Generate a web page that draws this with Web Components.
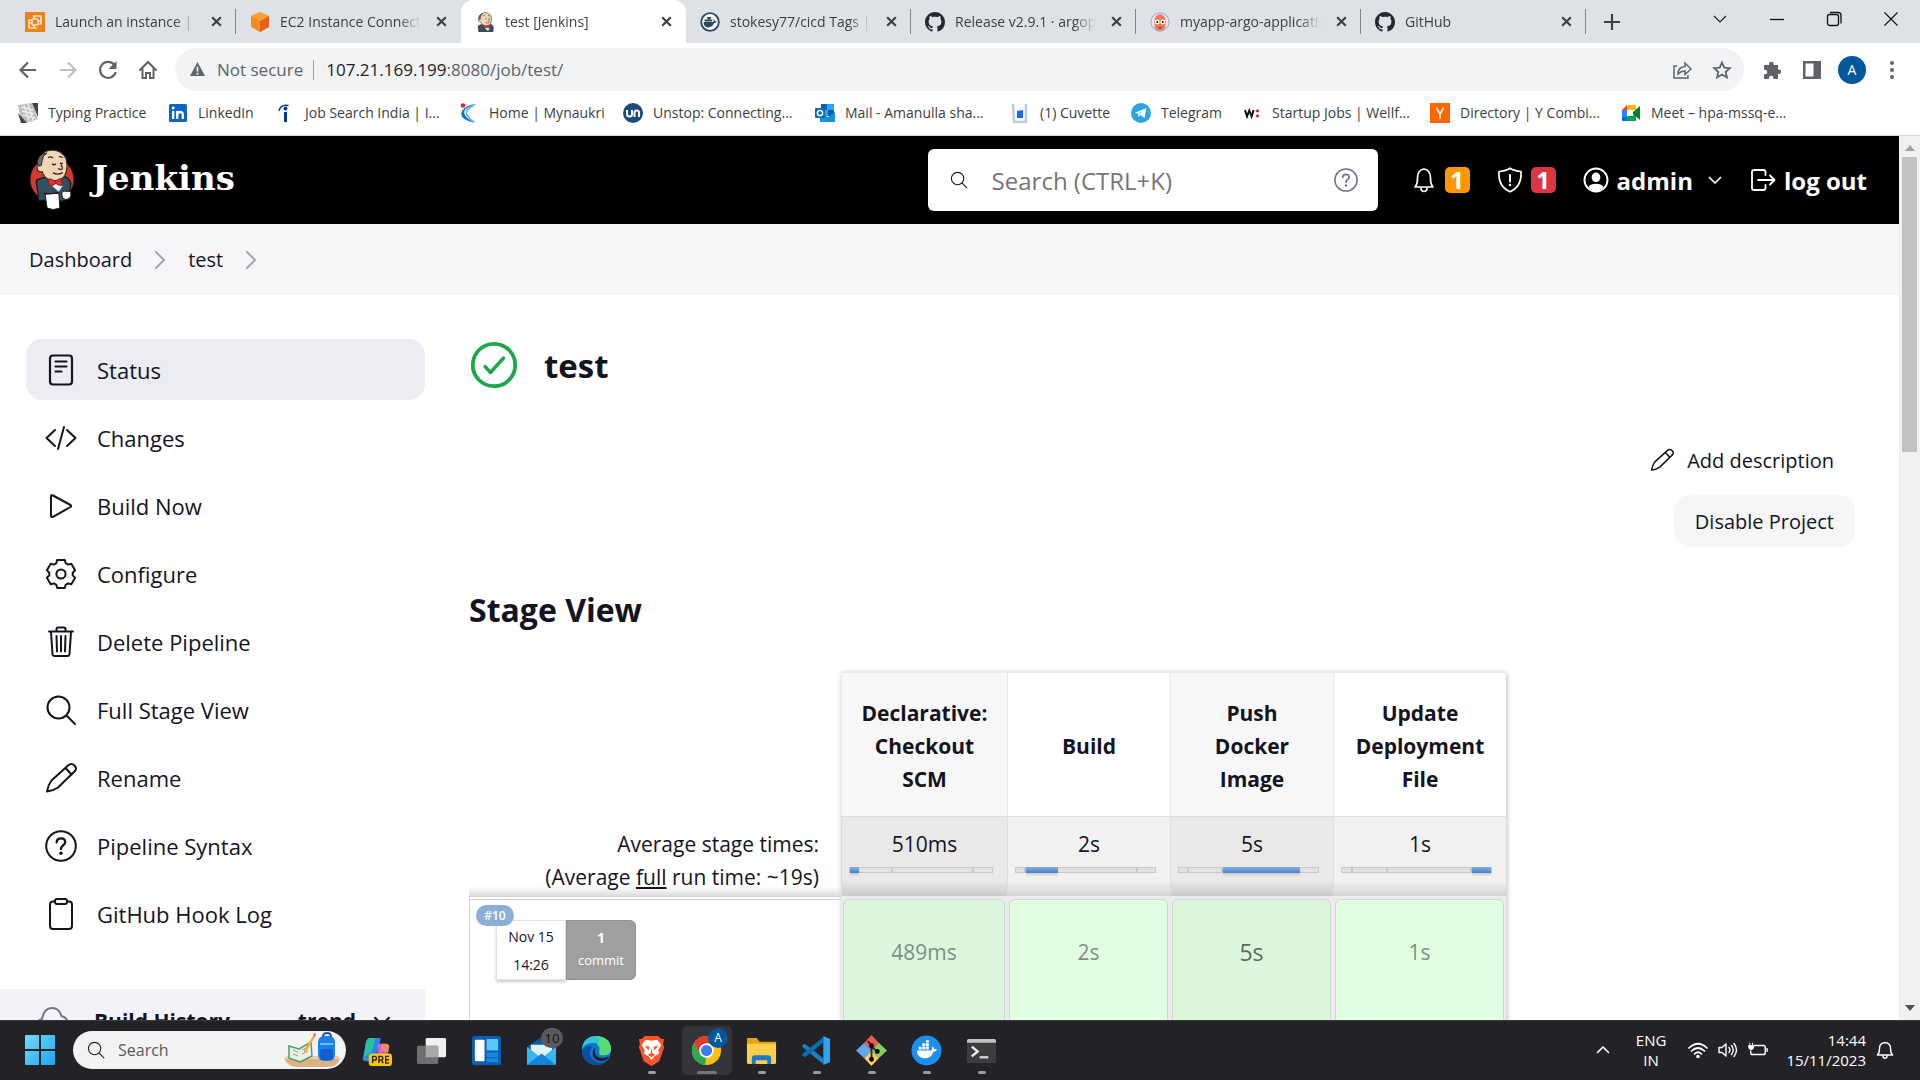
<!DOCTYPE html>
<html lang="en">
<head>
<meta charset="utf-8">
<title>test [Jenkins]</title>
<style>
html,body{margin:0;height:100%}
body{font-family:"Open Sans","Noto Sans",sans-serif;color:#14141f;overflow:hidden;background:#fff}
</style>
</head>
<body>
<desk-top></desk-top>
<script>
const gear = (() => {
  const p = [];
  for (let i = 0; i < 6; i++) {
    for (const [da, r] of [[-23, 11.8], [-15, 14.6], [15, 14.6], [23, 11.8]]) {
      const a = (i * 60 - 90 + da) * Math.PI / 180;
      p.push((16 + r * Math.cos(a)).toFixed(1) + ' ' + (16 + r * Math.sin(a)).toFixed(1));
    }
  }
  return 'M' + p.join('L') + 'Z';
})();
const butler = `
<path d="M10 46L8 33Q9 30 18 29L37 28Q42 30 43 35L42 46Q40 52 34 53L10 52Z" fill="#335061" stroke="#1d1916" stroke-width="1.4"/>
<path d="M11 17Q8 16 9 20Q10 24 14 23Q16 30 23 32Q33 34 37 27Q41 19 38 9Q33 1 24 1Q14 2 12 9Z" fill="#f0d6b7" stroke="#3a2c22" stroke-width="1.2"/>
<path d="M13 17L14 12Q14 7 19 4Q12 5 10 10Q8 14 10 17Z" fill="#6d6b6d" stroke="#2a2624"/>
<path d="M20 9Q22 7 25 9M31 8Q33 7 35 9M24 15Q26 17 28 15M32 14Q34 16 35 14M33 16Q36 20 33 21L30 20M25 24Q29 27 35 24" fill="none" stroke="#3a2c22" stroke-width="1.3"/>
<path d="M21 31L28 34L33 30L35 38L31 44L24 38Z" fill="#e8eef2" stroke="#335061"/>
<path d="M20 31Q22 29 27 33Q32 29 34 31L34 37Q30 37 28 35Q24 38 21 37Z" fill="#d33833" stroke="#8c1a15"/>`;
const cloth = `<path d="M17 46L31 45L32 60Q25 63 19 60Z" fill="#fff" stroke="#1d1916"/>
<path d="M15 45Q24 46 31 44" stroke="#1d1916" fill="none"/>
<path d="M34 46Q34 42 38 43L43 43Q44 47 42 50Q38 53 35 50Z" fill="#fff" stroke="#1d1916"/>`;
const S = (w, c = 'currentColor') => `fill="none" stroke="${c}" stroke-width="${w}" stroke-linecap="round" stroke-linejoin="round"`;
const octo = `<path fill="#24292f" d="M8 0C3.58 0 0 3.58 0 8c0 3.54 2.29 6.53 5.47 7.59.4.07.55-.17.55-.38 0-.19-.01-.82-.01-1.49-2.01.37-2.53-.49-2.69-.94-.09-.23-.48-.94-.82-1.13-.28-.15-.68-.52-.01-.53.63-.01 1.08.58 1.23.82.72 1.21 1.87.87 2.33.66.07-.52.28-.87.51-1.07-1.78-.2-3.64-.89-3.64-3.95 0-.87.31-1.59.82-2.15-.08-.2-.36-1.02.08-2.12 0 0 .67-.21 2.2.82.64-.18 1.32-.27 2-.27s1.36.09 2 .27c1.53-1.04 2.2-.82 2.2-.82.44 1.1.16 1.92.08 2.12.51.56.82 1.27.82 2.15 0 3.07-1.87 3.75-3.65 3.95.29.25.54.73.54 1.48 0 1.07-.01 1.93-.01 2.2 0 .21.15.46.55.38A8.01 8.01 0 0 0 16 8c0-4.42-3.58-8-8-8z"/>`;
/* name: [viewBox, markup] */
const ICONS = {
  jenkinsLogo: ['0 0 48 63', `<circle cx="24" cy="31" r="22" fill="#d33833"/>${butler}${cloth}`],
  jenkinsFav: ['2 0 44 46', butler],
  aws: ['0 0 20 20', `<rect width="20" height="20" fill="#ed8216"/><g fill="none" stroke="#fff" stroke-width="1.2"><rect x="7" y="7" width="6" height="6" rx="1"/><path d="M8 4h8v8h-3M12 16H4V8h3M9 4v3M4 11h3M13 9h3M9 13v3"/></g>`],
  ec2: ['0 0 20 20', `<path d="M10 0l9 4v11l-9 5-9-5V4z" fill="#f58a1f"/><path d="M10 9v11l9-5V4z" fill="#e8601c"/><path d="M10 0l9 4-9 5-9-5z" fill="#fd9f35"/>`],
  dockerHub: ['0 0 22 22', `<circle cx="11" cy="11" r="9.7" fill="#fff" stroke="#2c4a5c" stroke-width="2"/><path d="M4 11h10.500c.8-1 .6-2 .2-3 1.200.4 1.600 1.400 1.700 2.300h2c-.4 1.400-1.500 1.900-2.900 1.900C14.500 15.500 12 17 9 17 5.500 17 4 14.500 4 11z" fill="#2c4a5c"/><path d="M5 8.200h8.500v2.300H5zM8 5.500h4v2.500H8z" fill="#2c4a5c"/>`],
  github: ['0 0 16 16', octo],
  argo: ['0 0 22 22', `<circle cx="11" cy="11" r="10" fill="#e9e8f7" stroke="#9c93cf"/><path d="M5 9a6 6.500 0 0 1 12 0v6q0 5-6 5.500Q5 20 5 15z" fill="#ef7b4d"/><circle cx="8" cy="11" r="2.700" fill="#fff"/><circle cx="14" cy="11" r="2.700" fill="#fff"/><circle cx="8" cy="11" r="1"/><circle cx="14" cy="11" r="1"/><path d="M9 17q2 2 4 0z"/>`],
  close: ['0 0 12 12', `<path d="M2 2l8 8M10 2l-8 8" stroke="#3c4043" stroke-width="2"/>`],
  plus: ['0 0 16 16', `<path d="M8 0v16M0 8h16" stroke="#3c4043" stroke-width="2.200"/>`],
  winDown: ['0 0 16 16', `<path d="M2 5l6 6 6-6" fill="none" stroke="#222" stroke-width="1.200"/>`],
  winMin: ['0 0 16 16', `<path d="M1 8.500h14" stroke="#111" stroke-width="1.300"/>`],
  winMax: ['0 0 16 16', `<g fill="none" stroke="#111" stroke-width="1.300"><rect x="1.500" y="3.500" width="11" height="11" rx="2"/><path d="M4 1.500h8q3 0 3 3v8"/></g>`],
  winClose: ['0 0 16 16', `<path d="M1.500 1.500l13 13M14.500 1.500l-13 13" stroke="#111" stroke-width="1.200"/>`],
  back: ['0 0 20 20', `<path d="M18 10H3M10 2.500L2.500 10l7.500 7.500" fill="none" stroke="#5f6368" stroke-width="2.200"/>`],
  fwd: ['0 0 20 20', `<path d="M2 10h15M10 2.500l7.500 7.500-7.500 7.500" fill="none" stroke="#bcbfc3" stroke-width="2.200"/>`],
  reload: ['0 0 20 20', `<path d="M16.500 5A8 8 0 1 0 17.800 12" fill="none" stroke="#5f6368" stroke-width="2.200"/><path d="M18.500 1v8h-8z" fill="#5f6368"/>`],
  home: ['0 0 20 20', `<path d="M1.500 10.500L10 2l8.500 8.500M4.500 8.500v9.500h3.500v-5h4v5h3.500V8.500" fill="none" stroke="#5f6368" stroke-width="2"/>`],
  warn: ['0 0 16 16', `<path d="M8 0l8 15H0z" fill="#5f6368"/><path d="M8 5v5M8 11.500v2" stroke="#f1f3f4" stroke-width="1.800"/>`],
  share: ['0 0 20 20', `<path d="M5 6H2v12h14v-3M6 14q0-7 7-7.500V3l6 6-6 5.500V11q-4 0-7 3z" fill="none" stroke="#5f6368" stroke-width="1.500"/>`],
  star: ['0 0 20 20', `<path d="M10 2.500l2.300 5.200 5.600.5-4.200 3.700 1.200 5.500-4.900-2.900-4.900 2.900 1.200-5.500L2.100 8.200l5.600-.5z" fill="none" stroke="#5f6368" stroke-width="1.800"/>`],
  puzzle: ['0 0 20 20', `<path d="M2 5h5V4a2.300 2.300 0 0 1 4.600 0v1H16v4.500h.8a2.300 2.300 0 0 1 0 4.600H16V19h-4.500v-1a2.300 2.300 0 0 0-4.600 0v1H2v-4.700h1a2.200 2.200 0 0 0 0-4.500H2z" fill="#5f6368"/>`],
  panel: ['0 0 20 20', `<path d="M1 1h18v18H1zM3.500 3.500v13h8v-13z" fill="#5f6368" fill-rule="evenodd"/>`],
  dots: ['0 0 20 20', `<g fill="#5f6368"><circle cx="10" cy="3" r="2"/><circle cx="10" cy="10" r="2"/><circle cx="10" cy="17" r="2"/></g>`],
  typing: ['0 0 20 20', `<path d="M0 2L14 0l6 16-12 4-5-3z" fill="#bdbdbd"/><path d="M0 10l3 10h6zM14 0l6 14V0z" fill="#444"/><path d="M3 4l12 3M4 8l12 3M5 12l12 3M6 2l5 16M10 1l5 16" stroke="#eee" stroke-width="1.300"/>`],
  linkedin: ['0 0 20 20', `<rect x="1" y="1" width="18" height="18" rx="1.500" fill="#0a66c2"/><path d="M5.200 8v8M9.200 8v8M9.200 12q.3-3 3-3t2.600 3v4" fill="none" stroke="#fff" stroke-width="2.300"/><circle cx="5.200" cy="5" r="1.500" fill="#fff"/>`],
  indeed: ['0 0 20 20', `<path d="M10.500 9v10" stroke="#003a9b" stroke-width="3"/><circle cx="10.500" cy="5.500" r="2" fill="#003a9b"/><path d="M4 8q1.500-7 9.500-5.500" fill="none" stroke="#003a9b" stroke-width="1.400"/>`],
  naukri: ['0 0 20 20', `<path d="M18 1Q2 5 6 12q2 4 10 8Q-1 16 3 8 6 2 18 1z" fill="#1a6fd0"/><path d="M15 2Q5 7 8 12q3 5 7 7" fill="none" stroke="#4fb3ef" stroke-width="1.500"/><circle cx="4" cy="2.500" r="2.300" fill="#e5282f"/>`],
  unstop: ['0 0 20 20', `<circle cx="10" cy="10" r="10" fill="#1c4980"/><path d="M4 7v4q0 2.500 2.500 2.500T9 11V7M11.500 14V10q0-2.500 2.300-2.500T16 10v4" fill="none" stroke="#fff" stroke-width="2"/>`],
  outlook: ['0 0 20 20', `<path d="M6 1h13v12H6z" fill="#28a8ea"/><path d="M6 1h6v6H6z" fill="#0364b8"/><path d="M13 7h6v6h-6z" fill="#0a5fb0"/><path d="M5 10l8 4 7-5v10H5z" fill="#1490df"/><rect y="5" width="10" height="10" rx="1" fill="#0f6cbd"/><circle cx="5" cy="10" r="2.600" fill="none" stroke="#fff" stroke-width="1.500"/>`],
  cuvette: ['0 0 20 20', `<path d="M3 1l1 18h12V1" fill="none" stroke="#b9cbe4" stroke-width="2.500"/><path d="M7 8l6-1v8H7z" fill="#1769f5"/>`],
  telegram: ['0 0 20 20', `<circle cx="10" cy="10" r="10" fill="#2ca5e0"/><path d="M3.500 10L15.500 5l-2 10-4-3-2 2-.5-3.500z" fill="#fff"/><path d="M7 10.500L13 7l-4.500 5z" fill="#b5dcf1"/>`],
  wellfound: ['0 0 20 20', `<path d="M3 7l2 6.500 2.300-6 2.300 6 2-6.500" fill="none" stroke="#111" stroke-width="2"/><circle cx="15.500" cy="8" r="1.400" fill="#d0021b"/><circle cx="15.500" cy="13" r="1.400" fill="#d0021b"/>`],
  yc: ['0 0 20 20', `<rect width="20" height="20" fill="#f60"/><path d="M6.500 5L10 11l3.500-6M10 11v5" fill="none" stroke="#fff" stroke-width="1.500"/>`],
  meet: ['0 0 20 20', `<path d="M1 7l5-5v5z" fill="#ea4335"/><path d="M6 2h9v5H6z" fill="#fbbc04"/><path d="M1 7h5v7H1z" fill="#2684fc"/><path d="M1 14h5v4H2q-1 0-1-1z" fill="#0066da"/><path d="M6 13h5l4-3v8H6z" fill="#00ac47"/><path d="M11 10l8-7v14z" fill="#00832d"/><path d="M6 7h6v6H6z" fill="#fff"/>`],
  search: ['0 0 32 32', `<circle cx="13.500" cy="13.500" r="11" ${S(2)}/><path d="M21.500 21.500L30 30" ${S(2)}/>`],
  help: ['0 0 32 32', `<circle cx="16" cy="16" r="14.800" ${S(2)}/><path d="M11.700 12.200q.2-3.800 4.300-3.800t4.200 3.600q0 2-2.200 3.400Q16 16.700 16 19" ${S(2.400)}/><circle cx="16" cy="23.300" r="1.700" fill="currentColor"/>`],
  bell: ['0 0 26 26', `<path d="M4 20q2.500-3 2.500-9Q6.500 3 13 2q6.500 1 6.500 9 0 6 2.500 9z" ${S(1.700)}/><path d="M10 21q0 3.500 3 3.500t3-3.500" ${S(1.700)}/>`],
  shield: ['0 0 26 26', `<path d="M13 1.200q4 2.800 11 3.300 1 15-11 20.300Q1 19.500 2 4.500q7-.5 11-3.300z" ${S(1.700)}/><path d="M13 8v6.500" ${S(2)}/><circle cx="13" cy="18" r="1.300" fill="currentColor"/>`],
  user: ['0 0 26 26', `<circle cx="13" cy="13" r="11.500" ${S(1.900)}/><path d="M13 5.500a4.300 4.700 0 0 1 0 9.600 4.300 4.700 0 0 1 0-9.600zM5.500 20q2-3.300 7.500-3.300t7.500 3.300q-3 4-7.500 4t-7.500-4z" fill="currentColor"/>`],
  chevDown: ['0 0 16 16', `<path d="M2.500 5.500L8 11l5.500-5.500" ${S(1.700)}/>`],
  chevRight: ['0 0 18 18', `<path d="M5 1l8 8-8 8" ${S(2)}/>`],
  logout: ['0 0 26 26', `<path d="M15.500 8V5q0-2-2-2H4Q2 3 2 5v16q0 2 2 2h9.500q2 0 2-2v-3M8 13h16M20 8.500l4.500 4.500-4.500 4.500" ${S(1.800)}/>`],
  doc: ['0 0 32 32', `<rect x="5" y="1.500" width="22" height="29" rx="3" ${S(2.200)}/><path d="M10.500 7.500h11M10.500 12.500h11M10.500 17.500h6" ${S(2.200)}/>`],
  code: ['0 0 32 32', `<path d="M10 8L1.500 16l8.500 8M22 8l8.500 8-8.500 8M19 5l-6 22" ${S(2)}/>`],
  play: ['0 0 32 32', `<path d="M6 6.500q0-2 2-1L25.500 15q1.300 1 0 2L8 26.800q-2 .8-2-1z" ${S(2)}/>`],
  gear: ['0 0 32 32', `<path d="${gear}" ${S(2)}/><circle cx="16" cy="16" r="4.600" ${S(2)}/>`],
  trash: ['0 0 32 32', `<path d="M4 5.500h24M11.500 5V3q0-1.500 1.500-1.500h6q1.500 0 1.500 1.500v2M6 6l1.500 22q.2 2 2 2h13q1.800 0 2-2L26 6M11.500 10l.5 15.500M16 10v15.500M20.500 10L20 25.500" ${S(2)}/>`],
  pencil: ['0 0 32 32', `<path d="M2 29.500Q3 23 6.500 18.500L23 3.500Q26.500.5 29.500 3.500t0 6L13 25.500Q8 29 2 29.500zM20.500 6l6 6.500" ${S(2)}/>`],
  clipboard: ['0 0 32 32', `<path d="M10 3.500H8q-3 0-3 3V28q0 3 3 3h16q3 0 3-3V6.500q0-3-3-3h-2" ${S(2)}/><rect x="10" y="1" width="12" height="5" rx="2" ${S(2)}/>`],
  cloud: ['0 0 34 30', `<path d="M8 28Q1 27 1.500 20 2 14 7 13 9 2 17 2q7 0 9.500 8Q34 12 32.500 20q-1 8-8 8z" ${S(2, '#73738c')}/>`],
  ok: ['0 0 48 48', `<circle cx="25" cy="24" r="21.200" ${S(3.800, '#1ea64b')}/><path d="M16 25.500l5.500 6L34.500 17" ${S(3.400, '#1ea64b')}/>`],
  win: ['0 0 30 30', `<defs><linearGradient id="w" x1="0" y1="0" x2="1" y2="1"><stop stop-color="#6fdcfb"/><stop offset="1" stop-color="#1fa5ee"/></linearGradient></defs><path d="M0 1q0-1 1-1h13v14H0zM16 0h13q1 0 1 1v13H16zM0 16h14v14H1q-1 0-1-1zM16 16h14v13q0 1-1 1H16z" fill="url(#w)"/>`],
  bag: ['0 0 56 36', `<path d="M0 26h56q-2 9-12 9H14Q3 35 0 26z" fill="#dcb083"/><path d="M2 24h52l2 3H0z" fill="#f0cfa5"/><path d="M5 14l10 3 12-7 1 14-12 6-11-4z" fill="#e9f1e6" stroke="#4f9e63" stroke-width="1.500"/><path d="M9 18l5 2M9 22l5 2M18 18l6-3M18 22l6-3" stroke="#8fa697"/><path d="M29 4l2 1-9 15-2 1v-3z" fill="#f4ad3a"/><path d="M29 4l2 1 1-3-2-1z" fill="#ef5b61"/><rect x="34" y="4" width="17" height="25" rx="6" fill="#1b7ff0"/><path d="M39 5q0-4 4-4t4 4" fill="none" stroke="#1559b8" stroke-width="2"/><rect x="36" y="17" width="13" height="11" rx="3" fill="#0f5fd0"/><path d="M36 12h13" stroke="#68c1ff" stroke-width="2"/>`],
  copilot: ['0 0 32 32', `<path d="M9 3h9q3 0 2 3l-5 17q-1 4-5 4H5q-4 0-3-4L5 8q1-5 4-5z" fill="#2b86e8"/><path d="M9 3h6l-4 14-8 6L5 8q1-5 4-5z" fill="#27c2a0"/><path d="M17 9h8q5 0 4 4l-3 12q-1 4-5 4h-8q3-1 4-5z" fill="#c65af0"/><path d="M21 9h4q5 0 4 4l-1 5-8-2z" fill="#f08a5f"/><rect x="8" y="19" width="24" height="13" rx="3" fill="#fdc400"/><path d="M12 29v-7h2q2 0 2 2t-2 2h-2M18.500 29v-7h2q2 0 2 2t-2 2h-2M21 26l2 3M29 22h-3.500v7H29M25.500 25.500H29" fill="none" stroke="#2b2100" stroke-width="1.400"/>`],
  taskview: ['0 0 32 32', `<rect x="10" y="3" width="21" height="20" rx="1.500" fill="#f1f1f1"/><rect x="1" y="11" width="22" height="19" rx="1.500" fill="#6f6f70"/><path d="M10 11h13v12H10z" fill="#a9a9a9"/>`],
  widgets: ['0 0 32 32', `<rect x="1" y="1" width="30" height="30" rx="3" fill="#0a5fb4"/><rect x="4" y="5" width="10" height="22" rx="1" fill="#fff"/><rect x="16" y="4" width="12" height="12" rx="1" fill="#59c6f5"/><rect x="16" y="18" width="12" height="5" fill="#1788e0"/><rect x="16" y="24" width="12" height="4" fill="#1788e0"/>`],
  mail: ['0 0 32 32', `<path d="M1 12L16 2l15 10v19H1z" fill="#0c59a4"/><path d="M5 10h22v14H5z" fill="#dff3fd"/><path d="M1 12l15 12 15-12v19H1z" fill="#35b7f1"/><path d="M1 31l15-12 15 12z" fill="#1683d8"/>`],
  edge: ['0 0 32 32', `<circle cx="16" cy="16" r="15" fill="#1477cf"/><path d="M1 15Q2 1 16 1q14 1 15 13 0 7-8 7-5 0-4-4 2-9-7-9Q4 8 1 15z" fill="#35c6d4"/><path d="M16 1q14 1 15 13 0 7-8 7-5 0-4-4 1-5-2-7 4-5-1-9z" fill="#55dc77"/><path d="M12 12Q6 18 12 25q6 5 14 2-5 5-12 4Q3 29 1 18 3 9 12 12z" fill="#0c4fa0"/><path d="M15 13q-3 6 3 10 5 2 11-1-2 5-8 5-9-1-9-8 0-4 3-6z" fill="#232226"/>`],
  brave: ['0 0 32 32', `<path d="M9 1h14l3 3 3 0-1 5 1 4-5 14-8 5-8-5L3 13l1-4-1-5h3z" fill="#fb542b"/><path d="M16 6l6-1 4 5-3 6 1 3-5 3-3 4-3-4-5-3 1-3-3-6 4-5z" fill="#fff"/><path d="M9 11l5 1-1 4zM23 11l-5 1 1 4zM16 14l1 5 3 1-4 3-4-3 3-1z" fill="#fb542b"/>`],
  chrome: ['0 0 32 32', `<circle cx="16" cy="16" r="15" fill="#fbc116"/><path d="M3 8.500A15 15 0 0 1 29 8.500H16L9.500 20z" fill="#e33b2e"/><path d="M3 8.500l6.500 11.500L16 23.500 14.500 31A15 15 0 0 1 3 8.500z" fill="#2da94f"/><circle cx="16" cy="16" r="7.500" fill="#fff"/><circle cx="16" cy="16" r="5.800" fill="#3b7ded"/>`],
  folder: ['0 0 32 32', `<path d="M1 4q0-1 1-1h9l3 4h16q1 0 1 1v20H1z" fill="#e8a30c"/><path d="M1 9h30v19q0 2-2 2H3q-2 0-2-2z" fill="#fdcf4d"/><path d="M6 30v-6q0-3 3-3h14q3 0 3 3v6h-4v-4H10v4z" fill="#1c78c9"/>`],
  vscode: ['0 0 32 32', `<path d="M1 11l3-2 19 15v6L2 13z" fill="#1a80c4"/><path d="M1 21l3 2L23 8V2L2 19z" fill="#0e6cb0"/><path d="M23 1l7 3v24l-7 3z" fill="#31a4ef"/>`],
  git: ['0 0 32 32', `<path d="M16 0l7.500 8L16 16 8.500 8z" fill="#f05b50"/><path d="M8.500 8L16 16l-7.500 8L0 16z" fill="#63a7e8"/><path d="M23.500 8L32 16l-8.500 8L16 16z" fill="#8ccf59"/><path d="M16 16l7.500 8L16 32l-7.500-8z" fill="#f8cf63"/><path d="M12 6l4 5v14M16 12l6 5" stroke="#2b2b2b" stroke-width="2" fill="none"/><circle cx="16" cy="11" r="2.500"/><circle cx="22" cy="17" r="2.500"/><circle cx="16" cy="25" r="2.500"/>`],
  docker: ['0 0 32 32', `<circle cx="16" cy="16" r="15.500" fill="#1d8fee"/><path d="M6 16h15q1.500-2 .5-4 2 .5 2.500 2.500 2-.5 3 .5-1 2.500-4 2.500Q21 24 14 24 6.500 24 6 16z" fill="#fff"/><path d="M8 12h3v3H8zM11.700 12h3v3h-3zM15.400 12h3v3h-3zM11.700 8.500h3v3h-3zM15.400 8.500h3v3h-3zM15.400 5.500h3v2.300h-3z" fill="#fff"/>`],
  terminal: ['0 0 32 32', `<rect x="1" y="4" width="30" height="25" rx="2" fill="#3d3d3f"/><path d="M1 8V6q0-2 2-2h26q2 0 2 2v2z" fill="#c2c2c4"/><path d="M6 12l6 5-6 5" fill="none" stroke="#eee" stroke-width="2.500"/><path d="M14 23h9" stroke="#ddd" stroke-width="2.300"/>`],
  chevUp: ['0 0 16 16', `<path d="M2.500 10.500L8 5l5.500 5.500" ${S(1.700)}/>`],
  wifi: ['0 0 20 20', `<path d="M1 8q9-8.500 18 0M3.500 11q6.500-6 13 0M6.500 14q3.500-3.500 7 0" ${S(1.700)}/><circle cx="10" cy="16.500" r="1.800" fill="currentColor"/>`],
  speaker: ['0 0 20 20', `<path d="M1 7.500h3L8 4v12l-4-3.500H1zM11 7.500q2 2.500 0 5M13.500 5.500q3.500 4.500 0 9M16 3.500q5 6.500 0 13" ${S(1.400)}/>`],
  battery: ['0 0 22 20', `<path d="M7 5h10q2 0 2 2v6q0 2-2 2H5q-2 0-2-2v-2M21 8.500v3" ${S(1.600)}/><path d="M2 2v3M5 2v3M.8 5h5.400v2q0 2.500-2.700 2.500T.8 7z" fill="currentColor" stroke="currentColor"/>`],
  bellTray: ['0 0 20 20', `<path d="M2.500 15q2-2 2-6.500Q4.500 3 10 2.500 15.500 3 15.500 8.500 15.500 13 17.500 15zM8 16q0 2.300 2 2.300t2-2.300" ${S(1.500)}/>`],
};

function define(name, css, html) {
  customElements.define(name, class extends HTMLElement {
    constructor() { super(); this.attachShadow({ mode: 'open' }); }
    connectedCallback() {
      const t = document.createElement('template');
      t.innerHTML = `<style>*{box-sizing:border-box}:host{box-sizing:border-box}button{font:inherit;color:inherit;background:none;border:0;padding:0}a{color:inherit;text-decoration:none}${css}</style>` +
        (typeof html === 'function' ? html(this) : html);
      this.shadowRoot.replaceChildren(t.content.cloneNode(true));
    }
  });
}
const at = (e, n) => e.getAttribute(n) || '';

define('ui-icon', ':host{display:inline-flex;flex:none;width:20px;height:20px}svg{width:100%;height:100%;display:block;overflow:hidden}',
  e => { const [vb, m] = ICONS[at(e, 'name')]; return `<svg viewBox="${vb}" aria-hidden="true">${m}</svg>`; });

/* ---------- browser window ---------- */
define('browser-tab', `
:host{display:flex;align-items:center;flex:0 1 225px;min-width:0;height:100%;padding:0 13px 0 14px;position:relative;font-size:14px;color:#3c4043}
:host([active]){background:#fff;border-radius:12px 12px 0 0}
:host([line])::after{content:"";position:absolute;right:0;top:9px;height:25px;width:1px;background:#80868b}
.t{flex:1;min-width:0;margin-left:10px;white-space:nowrap;overflow:hidden;-webkit-mask-image:linear-gradient(90deg,#000 84%,transparent)}
button{display:flex;padding:0;margin-left:14px}
button ui-icon{width:13px;height:13px}`,
  e => `<ui-icon name="${at(e, 'icon')}"></ui-icon><span class="t"><slot></slot></span><button aria-label="Close tab"><ui-icon name="close"></ui-icon></button>`);

define('tab-strip', `
:host{display:flex;align-items:center;height:43px;background:#dee1e6;padding-left:11px}
.add{margin-left:18px;display:flex}.add ui-icon{width:16px;height:16px}
.win{margin-left:auto;display:flex;gap:41px;padding:0 21px 6px 0}.win button{display:flex}
.win ui-icon{width:16px;height:16px}`, `
<browser-tab icon="aws" line>Launch an instance | EC2</browser-tab>
<browser-tab icon="ec2">EC2 Instance Connect</browser-tab>
<browser-tab icon="jenkinsFav" active>test [Jenkins]</browser-tab>
<browser-tab icon="dockerHub" line>stokesy77/cicd Tags | D</browser-tab>
<browser-tab icon="github" line>Release v2.9.1 · argoproj</browser-tab>
<browser-tab icon="argo" line>myapp-argo-application</browser-tab>
<browser-tab icon="github" line>GitHub</browser-tab>
<button class="add" aria-label="New tab"><ui-icon name="plus"></ui-icon></button>
<div class="win"><button aria-label="Search tabs"><ui-icon name="winDown"></ui-icon></button><button aria-label="Minimize"><ui-icon name="winMin"></ui-icon></button><button aria-label="Restore"><ui-icon name="winMax"></ui-icon></button><button aria-label="Close"><ui-icon name="winClose"></ui-icon></button></div>`);

define('address-bar', `
:host{display:flex;align-items:center;height:53px;padding:0 18px;font-size:17px}
nav{display:flex;gap:20px;margin-right:17px}button{display:flex}
.omni{flex:1;display:flex;align-items:center;height:43px;border-radius:22px;background:#f1f3f4;padding:0 12px 0 15px;color:#5f6368}
.omni>ui-icon{width:15px;height:15px}
.sec{margin:0 10px 0 12px}.bar{width:1px;height:20px;background:#9aa0a6;margin-right:12px}
.url{flex:1}.url b{font-weight:400;color:#202124}
.acts{display:flex;gap:20px}.right{display:flex;align-items:center;gap:20px;margin-left:18px}
.right .ava{width:28px;height:28px;margin:0 -4px;border-radius:50%;background:#01579b;color:#fff;font-size:14px;justify-content:center;align-items:center}`, `
<nav><button aria-label="Back"><ui-icon name="back"></ui-icon></button><button aria-label="Forward"><ui-icon name="fwd"></ui-icon></button><button aria-label="Reload"><ui-icon name="reload"></ui-icon></button><button aria-label="Home"><ui-icon name="home"></ui-icon></button></nav>
<div class="omni"><ui-icon name="warn"></ui-icon><span class="sec">Not secure</span><span class="bar"></span><span class="url"><b>107.21.169.199</b>:8080/job/test/</span>
<div class="acts"><button aria-label="Share"><ui-icon name="share"></ui-icon></button><button aria-label="Bookmark"><ui-icon name="star"></ui-icon></button></div></div>
<div class="right"><button aria-label="Extensions"><ui-icon name="puzzle"></ui-icon></button><button aria-label="Side panel"><ui-icon name="panel"></ui-icon></button><button class="ava">A</button><button aria-label="Menu"><ui-icon name="dots"></ui-icon></button></div>`);

define('bookmark-link', ':host{display:block;font-size:14px;color:#3c4043;white-space:nowrap}a{display:flex;align-items:center;gap:10px}',
  e => `<a href="#"><ui-icon name="${at(e, 'icon')}"></ui-icon><span><slot></slot></span></a>`);
define('bookmark-bar', `:host{display:grid;align-items:center;height:40px;padding:0 0 6px 18px;border-bottom:1px solid #d5d8dc;
grid-template-columns:150px 107px 184px 164px 192px 195px 121px 111px 188px 191px auto}`, `
<bookmark-link icon="typing">Typing Practice</bookmark-link>
<bookmark-link icon="linkedin">LinkedIn</bookmark-link>
<bookmark-link icon="indeed">Job Search India | I...</bookmark-link>
<bookmark-link icon="naukri">Home | Mynaukri</bookmark-link>
<bookmark-link icon="unstop">Unstop: Connecting...</bookmark-link>
<bookmark-link icon="outlook">Mail - Amanulla sha...</bookmark-link>
<bookmark-link icon="cuvette">(1) Cuvette</bookmark-link>
<bookmark-link icon="telegram">Telegram</bookmark-link>
<bookmark-link icon="wellfound">Startup Jobs | Wellf...</bookmark-link>
<bookmark-link icon="yc">Directory | Y Combi...</bookmark-link>
<bookmark-link icon="meet">Meet – hpa-mssq-e...</bookmark-link>`);

/* ---------- Jenkins page ---------- */
define('alert-count', `:host{display:block}a{display:flex;align-items:center;gap:8px}ui-icon{width:26px;height:26px}
span{background:var(--tone);border-radius:5px;width:25px;height:26px;line-height:26px;text-align:center}`,
  e => `<a href="#"><ui-icon name="${at(e, 'icon')}"></ui-icon><span><slot></slot></span></a>`);
define('jenkins-header', `
:host{display:flex;align-items:center;height:88px;background:#000;color:#fff;padding:0 32px 0 28px;font-weight:700;font-size:24px}
.brand{display:flex;align-items:center;gap:16px;font:700 34px "DejaVu Serif",serif;margin-right:auto}
.brand ui-icon{width:48px;height:62px}.brand span{padding-bottom:5px}
.box{width:450px;height:62px;background:#fff;border-radius:6px;display:flex;align-items:center;padding:0 20px 0 22px;color:#14141f}
.box>ui-icon{width:18px;height:18px;margin-right:24px}
input{flex:1;min-width:0;border:0;outline:0;background:none;font:400 24px "Open Sans",sans-serif;padding:0}
input::placeholder{color:#757575}
.box a{display:flex;color:#73738c}.box a ui-icon{width:24px;height:24px}
.acts{display:flex;align-items:center;gap:27px;margin-left:33px}
.user,.out{display:flex;align-items:center;gap:8px}.user ui-icon,.out ui-icon{width:26px;height:26px}.user ui-icon:last-child{width:16px;height:16px;margin-left:6px}`, `
<a class="brand" href="#"><ui-icon name="jenkinsLogo"></ui-icon><span>Jenkins</span></a>
<label class="box"><ui-icon name="search"></ui-icon><input type="search" placeholder="Search (CTRL+K)" aria-label="Search"><a href="#" aria-label="Search help"><ui-icon name="help"></ui-icon></a></label>
<div class="acts"><alert-count icon="bell" style="--tone:#ff9800">1</alert-count><alert-count icon="shield" style="--tone:#dc3545">1</alert-count>
<a class="user" href="#"><ui-icon name="user"></ui-icon>admin<ui-icon name="chevDown"></ui-icon></a>
<a class="out" href="#"><ui-icon name="logout"></ui-icon>log out</a></div>`);

define('bread-crumbs', `:host{display:block;background:#f6f6f9;height:71px;padding-left:29px;font-size:20px;font-weight:500}
nav{display:flex;align-items:center;height:100%;gap:19px}ui-icon{width:18px;height:18px;color:#a3a3b8}`,
  `<nav><a href="#">Dashboard</a><ui-icon name="chevRight"></ui-icon><a href="#">test</a><ui-icon name="chevRight"></ui-icon></nav>`);

define('side-link', `:host{display:block}
a{display:flex;align-items:center;gap:20px;height:61px;padding-left:19px;border-radius:16px;font-size:22px;font-weight:500}
:host([active]) a{background:#ecedf3}ui-icon{width:32px;height:32px}`,
  e => `<a href="#"><ui-icon name="${at(e, 'icon')}"></ui-icon><span><slot></slot></span></a>`);
define('side-panel', `:host{display:block;width:425px;flex:none;padding-top:44px}
nav{display:flex;flex-direction:column;gap:7px;padding-left:26px}
.hist{display:flex;align-items:center;height:64px;margin-top:45px;padding:0 33px 0 35px;background:#f3f3f7;font-size:21px;font-weight:700}
.hist ui-icon{width:34px;height:30px;margin-right:25px}.hist a{margin-left:auto}.hist button ui-icon{width:20px;height:20px;margin:0 0 0 16px}.hist button{display:flex}`, `
<nav><side-link icon="doc" active>Status</side-link><side-link icon="code">Changes</side-link><side-link icon="play">Build Now</side-link><side-link icon="gear">Configure</side-link><side-link icon="trash">Delete Pipeline</side-link><side-link icon="search">Full Stage View</side-link><side-link icon="pencil">Rename</side-link><side-link icon="help">Pipeline Syntax</side-link><side-link icon="clipboard">GitHub Hook Log</side-link></nav>
<div class="hist"><ui-icon name="cloud"></ui-icon>Build History<a href="#">trend</a><button aria-label="Collapse"><ui-icon name="chevDown"></ui-icon></button></div>`);

define('time-bar', `:host{display:block;padding:0 14px 0 7px}
div{display:flex;height:6px;border:1px solid #c9c9c9;background:#e2e2e2}
i{border-right:2px solid #c9c9c9}i.on{border:0;margin:-1px 0;height:6px;background:linear-gradient(#83aee0,#4a80cf);box-shadow:0 2px 2px #0002}
i:last-child:not(.on){border:0}`,
  e => { const on = +at(e, 'on'); return `<div>${at(e, 'parts').split(' ').map((w, i) => `<i style="flex:${w}"${i === on ? ' class="on"' : ''}></i>`).join('')}</div>`; });

define('run-card', `:host{display:block;position:relative;width:max-content;margin:20px 0 0 26px;line-height:28px;font-size:14px;text-align:center}
.row{display:flex}.row>div{width:70px;height:60px}
.when{background:#fff;border:1px solid #e3e3e3;box-shadow:0 2px 3px #0003;padding-top:2px}
.com{background:#9f9f9f;color:#fff;border-radius:0 6px 6px 0;border:1px solid #8f8f8f;line-height:22px;padding-top:6px;font-size:13px;font-weight:500}
.com b,.com span,.when span{display:block}.com b{font-size:14px}
a{position:absolute;left:-20px;top:-15px;background:#8cb0d5;color:#fff;border-radius:11px;width:38px;height:21px;line-height:21px;font-size:12px;font-weight:600}`,
  `<div class="row"><div class="when"><span>Nov 15</span><span>14:26</span></div><div class="com"><b>1</b><span>commit</span></div></div><a href="#">#10</a>`);

define('stage-view', `:host{display:block;font-size:21px;line-height:33px}
table{border-collapse:separate;border-spacing:0;table-layout:fixed;width:1037px;position:relative}
th,td{padding:0;text-align:center}
thead th:not(.lead){height:144px;padding:3px 18px 0;border:solid #e9e9ec;border-width:1px 0 0 1px;background:#fff}
thead th:nth-child(even){background:#f7f7f7!important}
.avg>*{height:80px;vertical-align:top;padding-top:12px;font-weight:400}
.avg th{text-align:right;padding-right:22px;background:linear-gradient(#fff0 88%,#dcdcdc)}
.avg td{padding-top:11px;border:solid #dcdcdc;border-width:1px 0 0 1px;background:linear-gradient(#f1f1f1 82%,#d3d3d3)}
.avg td:nth-child(even){background:linear-gradient(#e9e9e9 80%,#cbcbcb)}
.avg time-bar{margin-top:6px}
.run>*{vertical-align:top;height:200px}
.run th{border:1px solid #d6d6d6;border-right:0;border-top:4px double #d2d2d2;text-align:left;font-weight:400}
.run td{padding:3px 2px 0;background:#ececef}
.run td div{height:200px;border:1px solid #cfd6cf;border-radius:6px;background:#e2fee2;padding-top:36px;color:#7f8f80}
.run td:nth-child(even) div{background:#dcf7dc}
.run .big{font-size:23px;color:#5c6a5d}
.shade{position:absolute;left:372px;right:0;top:0;bottom:0;box-shadow:1px 1px 5px #0004;pointer-events:none}
.wrap{position:relative;width:1037px}`, `
<div class="wrap"><div class="shade"></div><table>
<colgroup><col style="width:372px"><col style="width:166px"><col style="width:163px"><col style="width:163px"><col style="width:173px"></colgroup>
<thead><tr><th class="lead"></th><th>Declarative: Checkout SCM</th><th>Build</th><th>Push Docker Image</th><th>Update Deployment File</th></tr></thead>
<tbody><tr class="avg"><th>Average stage times:<br>(Average <u>full</u> run time: ~19s)</th>
<td>510ms<time-bar parts="9 33 81 18" on="0"></time-bar></td><td>2s<time-bar parts="8 33 80 18" on="1"></time-bar></td><td>5s<time-bar parts="8 33 79 18" on="2"></time-bar></td><td>1s<time-bar parts="9 35 85 20" on="3"></time-bar></td></tr>
<tr class="run"><th><run-card></run-card></th><td><div>489ms</div></td><td><div>2s</div></td><td><div class="big">5s</div></td><td><div>1s</div></td></tr></tbody></table></div>`);

define('job-main', `:host{display:block;flex:1;padding:44px 44px 0}
h1,h2{margin:0;font-weight:700;font-size:33px}
h1{display:flex;align-items:center;gap:27px;height:52px}h1 ui-icon{width:48px;height:48px}
.acts{display:flex;flex-direction:column;align-items:flex-end;gap:9px;margin-top:43px;font-size:20px;font-weight:500}
.acts a,.acts button{display:flex;align-items:center;gap:13px;height:52px;padding:0 21px}
.acts ui-icon{width:24px;height:24px}.acts button{background:#f6f6f9;border-radius:16px}
h2{margin:39px 0 38px;font-size:32px;line-height:48px}`, `
<h1><ui-icon name="ok"></ui-icon>test</h1>
<div class="acts"><a href="#"><ui-icon name="pencil"></ui-icon>Add description</a><button>Disable Project</button></div>
<h2>Stage View</h2><stage-view></stage-view>`);

define('scroll-track', `:host{display:flex;flex-direction:column;align-items:center;justify-content:space-between;width:21px;background:#f1f1f1;flex:none}
i{border:5px solid transparent;border-bottom:6px solid #a3a3a3;border-top:0;margin-top:9px}
i:last-child{border-bottom:0;border-top:6px solid #505050;margin:0 0 9px}
div{flex:1;width:100%;padding:6px 3px}div::before{content:"";display:block;height:35%;background:#c1c1c1}`, '<i></i><div></div><i></i>');

define('web-page', `:host{display:flex;flex:1;min-height:0;overflow:hidden;background:#fff}
.doc{flex:1;min-width:0;overflow:hidden}.cols{display:flex}`,
  `<div class="doc"><jenkins-header></jenkins-header><bread-crumbs></bread-crumbs><div class="cols"><side-panel></side-panel><job-main></job-main></div></div><scroll-track></scroll-track>`);

/* ---------- taskbar ---------- */
define('task-app', `:host{display:flex;width:55px;height:60px;justify-content:center;align-items:center;position:relative}
button{width:50px;height:49px;border-radius:5px;display:flex;align-items:center;justify-content:center}
:host([active]) button{background:#353438}
ui-icon{width:31px;height:31px}
:host([open])::after,:host([active])::after{content:"";position:absolute;bottom:6px;left:50%;transform:translateX(-50%);width:8px;height:3px;border-radius:2px;background:#9b9b9b}
:host([active])::after{width:20px;background:#7a7375}
span{position:absolute;right:6px;top:8px;width:22px;height:20px;border-radius:10px;font-size:13px;line-height:20px;text-align:center;background:#5d5a5c;color:#111}
span.a{background:#01579b;color:#fff;font-size:12px;width:20px}`,
  e => `<button aria-label="${at(e, 'name')}"><ui-icon name="${at(e, 'name')}"></ui-icon></button>${at(e, 'badge') ? `<span class="${at(e, 'badge') === 'A' ? 'a' : ''}">${at(e, 'badge')}</span>` : ''}`);
define('task-bar', `:host{display:flex;align-items:center;height:60px;flex:none;background:#232226;box-shadow:inset 0 1px #3a393d;color:#fff;font-size:15px;padding:0 25px}
.start{display:flex}.start ui-icon{width:30px;height:30px}
.find{display:flex;align-items:center;width:273px;height:38px;border-radius:19px;background:#f3f3f3;margin:0 3px 0 18px;padding:0 6px 0 14px;color:#222}
.find ui-icon{width:18px;height:18px}.find ui-icon:last-child{width:56px;height:36px}
input{flex:1;min-width:0;border:0;background:none;font:400 16px "Open Sans",sans-serif;margin-left:13px;padding:0}input::placeholder{color:#5a5a5a}
.tray{margin-left:auto;display:flex;align-items:center;line-height:20px}
.lang{text-align:center;margin:0 22px 0 25px}.net{display:flex;gap:10px;margin-right:18px}.time{text-align:right;margin-right:9px}
.up{display:flex}.up ui-icon{width:16px;height:16px}.lang span,.time span{display:block}`, `
<button class="start" aria-label="Start"><ui-icon name="win"></ui-icon></button>
<label class="find"><ui-icon name="search"></ui-icon><input placeholder="Search" aria-label="Search Windows"><ui-icon name="bag"></ui-icon></label>
<task-app name="copilot"></task-app><task-app name="taskview"></task-app><task-app name="widgets"></task-app><task-app name="mail" badge="10"></task-app><task-app name="edge"></task-app><task-app name="brave" open></task-app><task-app name="chrome" active badge="A"></task-app><task-app name="folder" open></task-app><task-app name="vscode" open></task-app><task-app name="git" open></task-app><task-app name="docker" open></task-app><task-app name="terminal" open></task-app>
<div class="tray"><button class="up" aria-label="Hidden icons"><ui-icon name="chevUp"></ui-icon></button><div class="lang"><span>ENG</span><span>IN</span></div><div class="net"><ui-icon name="wifi"></ui-icon><ui-icon name="speaker"></ui-icon><ui-icon name="battery"></ui-icon></div><div class="time"><span>14:44</span><span>15/11/2023</span></div><ui-icon name="bellTray"></ui-icon></div>`);

define('desk-top', ':host{display:flex;flex-direction:column;height:100vh}',
  `<tab-strip></tab-strip><address-bar></address-bar><bookmark-bar></bookmark-bar><web-page></web-page><task-bar></task-bar>`);
</script>
</body>
</html>
